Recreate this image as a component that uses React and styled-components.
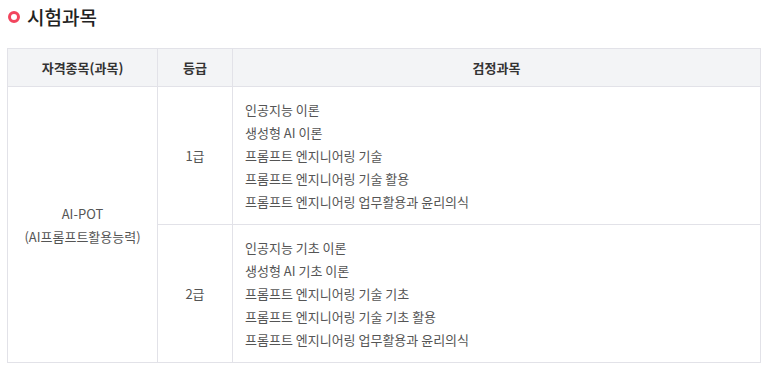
import React from "react"
import styled, { createGlobalStyle } from "styled-components"

const GlobalStyle = createGlobalStyle`
  body {
    margin: 0;
    background: #fff;
    font-family: "Noto Sans CJK KR", "Noto Sans", sans-serif;
  }
`

const subjects = [
  {
    grade: "1급",
    items: [
      "인공지능 이론",
      "생성형 AI 이론",
      "프롬프트 엔지니어링 기술",
      "프롬프트 엔지니어링 기술 활용",
      "프롬프트 엔지니어링 업무활용과 윤리의식",
    ],
  },
  {
    grade: "2급",
    items: [
      "인공지능 기초 이론",
      "생성형 AI 기초 이론",
      "프롬프트 엔지니어링 기술 기초",
      "프롬프트 엔지니어링 기술 기초 활용",
      "프롬프트 엔지니어링 업무활용과 윤리의식",
    ],
  },
]

const App = () => {
  return (
    <>
      <GlobalStyle />
      <Wrap>
        <Title>
          <Dot />
          시험과목
        </Title>
        <Table>
          <colgroup>
            <col style={{ width: 150 }} />
            <col style={{ width: 75 }} />
            <col />
          </colgroup>
          <thead>
            <tr>
              <Th>자격종목(과목)</Th>
              <Th>등급</Th>
              <Th>검정과목</Th>
            </tr>
          </thead>
          <tbody>
            {subjects.map((s, i) => (
              <tr key={s.grade}>
                {i === 0 && (
                  <Td rowSpan={subjects.length}>
                    AI-POT
                    <br />
                    (AI프롬프트활용능력)
                  </Td>
                )}
                <Td>{s.grade}</Td>
                <ListTd>
                  {s.items.map((t) => (
                    <div key={t}>{t}</div>
                  ))}
                </ListTd>
              </tr>
            ))}
          </tbody>
        </Table>
      </Wrap>
    </>
  )
}

const Wrap = styled.div`
  padding: 5px 12px 0 7px;
`

const Title = styled.h3`
  display: flex;
  align-items: center;
  gap: 7px;
  margin: 0 0 19px 1px;
  font-size: 19px;
  font-weight: 500;
  line-height: 24px;
  color: #222;
`

const Dot = styled.span`
  width: 6px;
  height: 6px;
  border: 3px solid #f2455d;
  border-radius: 50%;
`

const Table = styled.table`
  width: 754px;
  border-collapse: collapse;
  table-layout: fixed;
  font-size: 13px;
  color: #555;
`

const Th = styled.th`
  height: 37px;
  padding: 0;
  background: #f3f4f6;
  border: 1px solid #e2e2e8;
  color: #333;
  font-weight: 700;
  text-align: center;
`

const Td = styled.td`
  padding: 0;
  border: 1px solid #e2e2e8;
  text-align: center;
  line-height: 23px;
`

const ListTd = styled(Td)`
  text-align: left;
  padding: 11px 12px;
`

export default App
